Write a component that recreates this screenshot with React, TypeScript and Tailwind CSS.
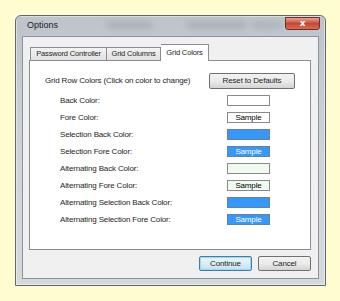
const rows: { label: string; bg: string; text?: string; fg?: string; border: string }[] = [
  { label: "Back Color:", bg: "bg-white", border: "border-[#8a8a8a]" },
  { label: "Fore Color:", bg: "bg-white", text: "Sample", fg: "text-black", border: "border-[#8a8a8a]" },
  { label: "Selection Back Color:", bg: "bg-[#3399ff]", border: "border-[#6c7f93]" },
  { label: "Selection Fore Color:", bg: "bg-[#3399ff]", text: "Sample", fg: "text-white", border: "border-[#6c7f93]" },
  { label: "Alternating Back Color:", bg: "bg-[#f0fbf0]", border: "border-[#8a8a8a]" },
  { label: "Alternating Fore Color:", bg: "bg-[#f0fbf0]", text: "Sample", fg: "text-black", border: "border-[#8a8a8a]" },
  { label: "Alternating Selection Back Color:", bg: "bg-[#3399ff]", border: "border-[#6c7f93]" },
  { label: "Alternating Selection Fore Color:", bg: "bg-[#3399ff]", text: "Sample", fg: "text-white", border: "border-[#6c7f93]" },
];

function Swatch({ bg, text, fg, border }: { bg: string; text?: string; fg?: string; border: string }) {
  return (
    <div className={`w-[43px] h-[11px] border ${border} ${bg} flex items-center justify-center`}>
      {text && <span className={`text-[8px] leading-none ${fg}`}>{text}</span>}
    </div>
  );
}

export default function App() {
  return (
    <div
      className="w-[340px] h-[301px] bg-[#fffdd0] pt-[15px] pl-[15px] text-[#1e1e1e] tracking-[-0.15px]"
      style={{ fontFamily: '"Liberation Sans", Arial, sans-serif' }}
    >
      {/* window frame */}
      <div className="relative w-[311px] h-[271px] rounded-t-[6px] border border-[#62676d] bg-gradient-to-b from-[#bcc4cc] via-[#cdd3d9] to-[#d4d9de] flex flex-col px-[6px] pb-[6px] shadow-[inset_0_0_0_1px_rgba(255,255,255,0.45)]">
        {/* title bar */}
        <div className="relative h-[20px] flex items-center pl-[5px] overflow-hidden">
          <div className="absolute left-[85px] top-[6px] w-[45px] h-[6px] rounded-full bg-[#8c939b] opacity-50 blur-[3px]" />
          <div className="absolute left-[165px] top-[6px] w-[60px] h-[6px] rounded-full bg-[#8c939b] opacity-50 blur-[3px]" />
          <div className="absolute left-[230px] top-[6px] w-[30px] h-[6px] rounded-full bg-[#8c939b] opacity-40 blur-[3px]" />
          <span className="relative text-[9px] text-[#1b1b1b] tracking-normal">Options</span>
        </div>
        {/* close button */}
        <div className="absolute top-[1px] right-[5px] w-[35px] h-[13px] rounded-b-[3px] border border-[#6b3027] bg-gradient-to-b from-[#e7a395] via-[#c94633] to-[#d66a55] flex items-center justify-center">
          <span className="text-white text-[9px] font-bold leading-none" style={{ fontFamily: '"DejaVu Sans", sans-serif' }}>x</span>
        </div>

        {/* client area */}
        <div className="flex-1 bg-[#f0f0f0] border border-[#8c939b] flex flex-col pl-[6px] pr-[7px] pt-[7px]">
          {/* tabs */}
          <div className="h-[16px] flex items-end pl-[1px] relative z-10">
            <div className="w-[77px] h-[13px] border border-[#898c95] border-b-0 bg-gradient-to-b from-[#f3f3f3] to-[#e1e1e1] flex items-center justify-center text-[7.5px]">
              Password Controller
            </div>
            <div className="w-[54px] h-[13px] border border-[#898c95] border-l-0 border-b-0 bg-gradient-to-b from-[#f3f3f3] to-[#e1e1e1] flex items-center justify-center text-[7.5px]">
              Grid Columns
            </div>
            <div className="w-[48px] h-[17px] -mb-px border border-[#898c95] border-l-0 border-b-0 bg-white flex items-start justify-center pt-[2px] text-[7.5px]">
              Grid Colors
            </div>
          </div>

          {/* tab panel */}
          <div className="h-[190px] bg-white border border-[#898c95] flex flex-col pt-[12px] pl-[15px] pr-[15px]">
            <div className="flex items-center justify-between">
              <span className="text-[8px]">Grid Row Colors (Click on color to change)</span>
              <button
                type="button"
                className="w-[86px] h-[16px] rounded-[2px] border border-[#707070] bg-gradient-to-b from-[#f2f2f2] via-[#ebebeb] to-[#d4d4d4] text-[8px] text-[#1e1e1e]"
              >
                Reset to Defaults
              </button>
            </div>
            <div className="flex flex-col gap-[6px] mt-[6px] pl-[15px]">
              {rows.map((r) => (
                <div key={r.label} className="flex items-center">
                  <span className="w-[167px] text-[8px] leading-none">{r.label}</span>
                  <Swatch bg={r.bg} text={r.text} fg={r.fg} border={r.border} />
                </div>
              ))}
            </div>
          </div>

          {/* buttons */}
          <div className="flex justify-end gap-[6px] mt-[6px]">
            <button
              type="button"
              className="w-[53px] h-[15px] rounded-[2px] border border-[#3c7fb1] bg-gradient-to-b from-[#eaf6fd] via-[#dcecf6] to-[#c4e0f2] shadow-[inset_0_0_0_1px_#9fd5f5] text-[8px] text-[#1e1e1e]"
            >
              Continue
            </button>
            <button
              type="button"
              className="w-[53px] h-[15px] rounded-[2px] border border-[#707070] bg-gradient-to-b from-[#f2f2f2] via-[#ebebeb] to-[#d4d4d4] text-[8px] text-[#1e1e1e]"
            >
              Cancel
            </button>
          </div>
        </div>
      </div>
    </div>
  );
}
